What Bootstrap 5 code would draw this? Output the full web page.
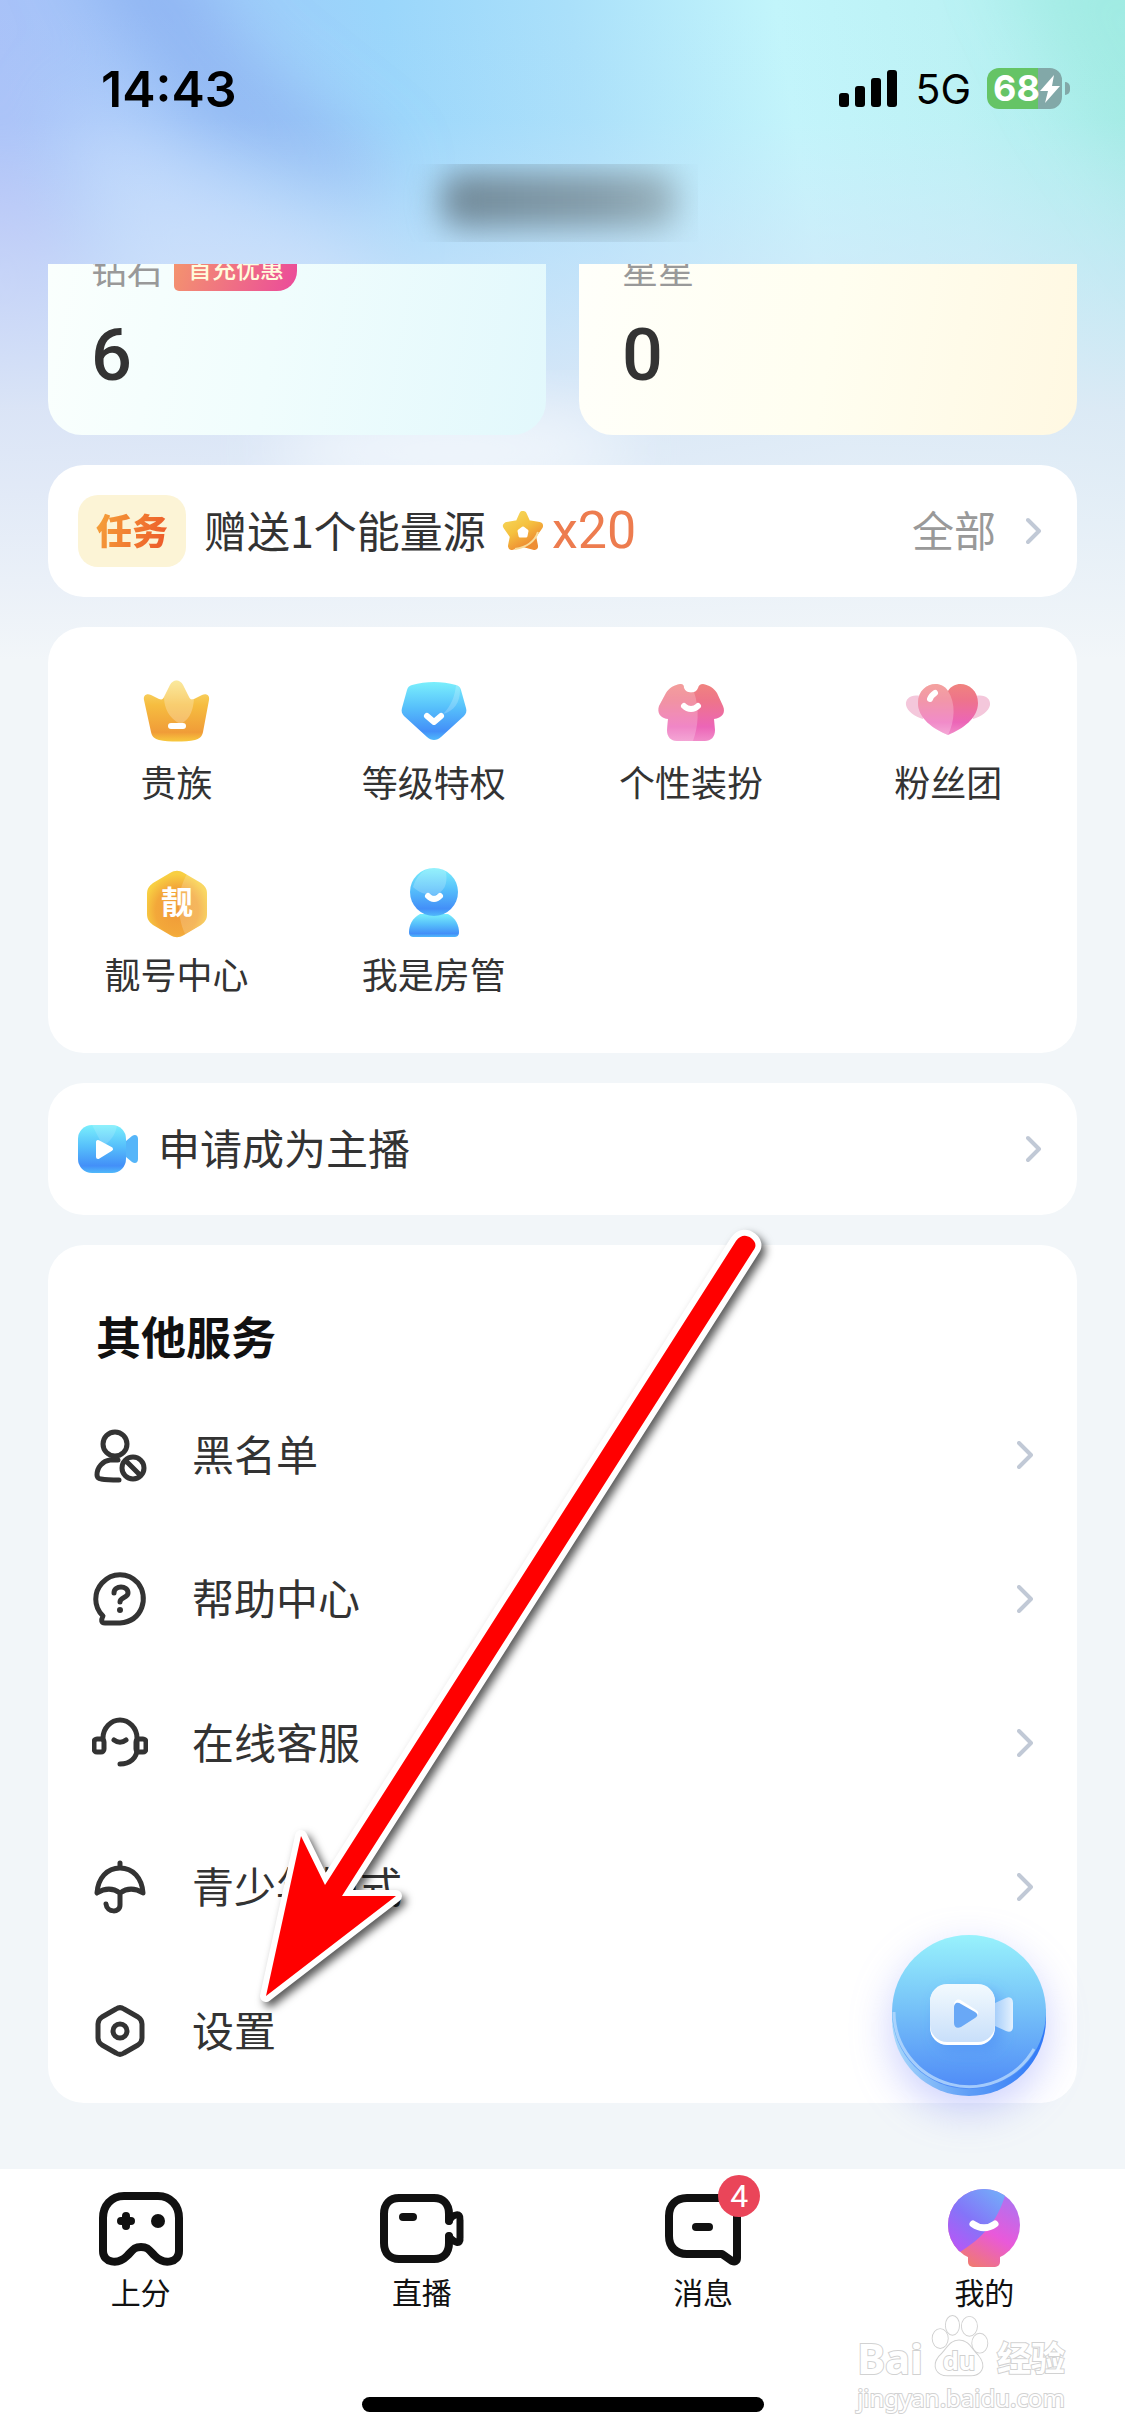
<!DOCTYPE html>
<html lang="zh-CN">
<head>
<meta charset="utf-8">
<meta name="viewport" content="width=device-width, initial-scale=1">
<title>我的</title>
<link rel="stylesheet" href="https://cdn.jsdelivr.net/npm/bootstrap@5.3.0/dist/css/bootstrap.min.css">
<style>
  body { font-family: "Noto Sans CJK SC", sans-serif; color: #333; background: #f2f6f9; font-size: 42px; line-height: 54px; }
  a { color: inherit; text-decoration: none; }
  svg { display: block; flex: none; }
  .app-page { min-height: 100vh; position: relative; }
  .backdrop { position: absolute; top: 0; left: 0; width: 100%; height: 660px; z-index: -1; }
  .status-bar { padding: 65px 55px 0 101px; height: 112px; font-family: Inter, sans-serif; color: #000; }
  .clock { font-size: 50px; font-weight: 600; }
  .net { font-size: 41px; }
  .battery { width: 75px; height: 41px; border-radius: 12px; background: linear-gradient(90deg, #65c466 68%, #82a8a8 68%); color: #fff; font-size: 36px; font-weight: 700; line-height: 41px; padding-left: 6px; }
  .battery-nub { width: 5px; height: 13px; border-radius: 0 6px 6px 0; background: #82a8a8; margin-left: 3px; }
  .name-strip { height: 78px; width: 300px; margin: 52px 0 22px 398px; overflow: hidden; }
  .name-blur { width: 236px; height: 56px; margin: 8px 0 0 43px; border-radius: 20px; background: linear-gradient(90deg, #6f8796, #849ca9 70%, #9bb5c0); filter: blur(16px); }
  .wallet { overflow: hidden; gap: 33px; }
  .wallet-card { flex: 1; height: 171px; padding: 0 43px; border-radius: 0 0 34px 34px; overflow: hidden; }
  .wallet-card.gem { background: linear-gradient(100deg, #fafffd, #f0fdfd 45%, #e2f8fc); }
  .wallet-card.star { background: linear-gradient(100deg, #fffffa, #fffef0 50%, #fff8e2); }
  .wallet-head { height: 46px; margin-top: -19px; line-height: 46px; font-size: 36px; color: #999; gap: 11px; }
  .promo { height: 46px; line-height: 46px; padding: 0 13px 0 14px; border-radius: 20px 20px 20px 5px; background: linear-gradient(110deg, #f4976c, #eb4a9b); color: #fffbdc; font-size: 24px; font-weight: 500; }
  .wallet-num { font-family: Roboto, sans-serif; font-weight: 500; font-size: 72px; line-height: 72px; margin-top: 29px; }
  .stack { padding: 0 48px; gap: 30px; }
  .panel { background: #fff; border-radius: 36px; }
  .line-panel { height: 132px; padding: 0 35px 0 30px; }
  .line-text { padding-bottom: 4px; }
  .task-tag { width: 108px; height: 72px; border-radius: 20px; background: #fcf4d6; line-height: 68px; font-size: 36px; font-weight: 900; margin-right: 18px; }
  .task-tag span { background: linear-gradient(110deg, #f6a63b, #ec5528); -webkit-background-clip: text; background-clip: text; color: transparent; }
  .task-text { font-size: 43px; }
  .reward { font-family: Roboto, sans-serif; font-size: 52px; color: #ed7c4f; }
  .muted { color: #999; margin-right: 30px; }
  .cam-icon { margin-right: 18px; }
  .grid-panel { padding: 48px 0 54px; row-gap: 60px; font-size: 36px; line-height: 48px; }
  .grid-panel svg { width: 90px; height: 72px; margin-bottom: 10px; overflow: visible; }
  .grid-panel a { height: 132px; }
  .services { padding-top: 64px; }
  .services h2 { font-size: 45px; line-height: 54px; font-weight: 700; color: #111; margin: 0 0 20px 48px; }
  .service-row { height: 144px; padding: 0 44px; }
  .service-row svg:first-child { margin-right: 44px; }
  .ink { fill: none; stroke: #333; stroke-width: 5; stroke-linecap: round; stroke-linejoin: round; }
  .chev { fill: none; stroke: #c1c9d6; stroke-width: 4; stroke-linecap: round; stroke-linejoin: round; }
  .fab { right: 30px; bottom: 6px; filter: drop-shadow(0 14px 20px rgba(110,120,250,.35)); }
  .pointer { left: 200px; top: -30px; pointer-events: none; filter: drop-shadow(4px 5px 4px rgba(0,0,0,.65)); }
  .tabs { margin-top: 66px; height: 267px; background: #fff; font-size: 30px; line-height: 40px; color: #111; }
  .tabs a { flex: 1; padding-top: 18px; }
  .tabs a svg { width: 90px; height: 84px; }
  .tab-ink { fill: none; stroke: #111; stroke-width: 8; stroke-linecap: round; stroke-linejoin: round; }
  .count { width: 42px; height: 42px; border-radius: 50%; left: 60px; top: -12px; background: #ea4559; color: #fff; font: 400 32px/43px Roboto, sans-serif; }
  .home-bar { width: 402px; height: 15px; border-radius: 8px; bottom: 24px; background: #000; }
  .watermark { right: 60px; bottom: 24px; color: #fff; -webkit-text-stroke: 2px #d2d2d2; paint-order: stroke; font-family: "Noto Sans", "Noto Sans CJK SC", sans-serif; }
  .wm-top { font-size: 42px; font-weight: 700; line-height: 44px; height: 44px; margin-bottom: 4px; }
  .wm-top .wm-cn { font-size: 34px; }
  .wm-url { font-size: 24px; line-height: 28px; }
</style>
</head>
<body>
<div class="app-page d-flex flex-column">
  <svg class="backdrop" viewBox="0 0 1125 660" preserveAspectRatio="none" aria-hidden="true">
    <defs>
      <linearGradient id="sky" gradientUnits="userSpaceOnUse" x1="0" y1="60" x2="1125" y2="-120"><stop stop-color="#a9c2f8"/><stop offset=".16" stop-color="#a0c8f9"/><stop offset=".34" stop-color="#9ad6fb"/><stop offset=".5" stop-color="#aae0fa"/><stop offset=".68" stop-color="#c2f5fb"/><stop offset=".82" stop-color="#bcf2f5"/><stop offset="1" stop-color="#a3ede7"/></linearGradient>
      <linearGradient id="fade" x2="0" y2="1"><stop stop-color="#dbe6f8" stop-opacity="0"/><stop offset=".18" stop-color="#d5e6fa" stop-opacity=".05"/><stop offset=".4" stop-color="#d6e6f9" stop-opacity=".55"/><stop offset=".62" stop-color="#e1e9f6" stop-opacity=".88"/><stop offset="1" stop-color="#f2f6f9"/></linearGradient>
      <filter id="soft" x="-50%" y="-50%" width="200%" height="200%"><feGaussianBlur stdDeviation="34"/></filter>
    </defs>
    <rect width="1125" height="660" fill="url(#sky)"/>
    <g filter="url(#soft)">
      <path fill="#84a9ef" fill-opacity=".6" d="M60-60h110l70 110 150 120-30 40-160-80z"/>
      <path fill="#c6ddfd" fill-opacity=".7" d="M60 90 180 160 370 260 360 330 130 330z"/>
      <path fill="#b9b4f5" fill-opacity=".45" d="M-60 150 50 200 90 300 20 380-60 380z"/>
      <path fill="#9ceadd" fill-opacity=".5" d="M1000-60h200v340L1070 90z"/>
    </g>
    <rect width="1125" height="660" fill="url(#fade)"/>
    <ellipse cx="450" cy="450" rx="180" ry="40" fill="#f8fbfe" fill-opacity=".8" filter="url(#soft)"/>
  </svg>
  <header>
    <div class="status-bar d-flex align-items-center justify-content-between">
      <span class="clock">14:43</span>
      <div class="d-flex align-items-center">
        <svg width="60" height="38" viewBox="0 0 60 38"><rect x="0" y="23" width="10" height="14" rx="3"/><rect x="16" y="16" width="10" height="21" rx="3"/><rect x="32" y="8" width="10" height="29" rx="3"/><rect x="48" y="0" width="10" height="37" rx="3"/></svg>
        <span class="net ms-3 me-3">5G</span>
        <div class="battery d-flex align-items-center"><span>68</span><svg width="20" height="28" viewBox="0 0 20 28"><path fill="#fff" d="M14 0 0 16h8l-3 12L20 11h-8z"/></svg></div>
        <div class="battery-nub"></div>
      </div>
    </div>
    <div class="name-strip"><div class="name-blur"></div></div>
  </header>

  <main class="stack d-flex flex-column">
    <section class="wallet d-flex">
      <div class="wallet-card gem">
        <div class="wallet-head d-flex align-items-end"><span>钻石</span><span class="promo">首充优惠</span></div>
        <div class="wallet-num">6</div>
      </div>
      <div class="wallet-card star">
        <div class="wallet-head">星星</div>
        <div class="wallet-num">0</div>
      </div>
    </section>

    <a href="#" class="panel line-panel d-flex align-items-center">
      <span class="task-tag text-center"><span>任务</span></span>
      <span class="task-text line-text">赠送1个能量源</span>
      <svg class="ms-3 me-2" width="42" height="40" viewBox="0 0 42 40"><defs><linearGradient id="gs" x2="0.6" y2="1"><stop stop-color="#f5d75a"/><stop offset=".5" stop-color="#f5c13f"/><stop offset="1" stop-color="#ee8d33"/></linearGradient></defs><path fill="url(#gs)" stroke="url(#gs)" stroke-width="8" stroke-linejoin="round" d="m21 4 4 9 12 2-7 10 2 10-11-3-11 3 2-10-7-10 12-2z"/><path fill="none" stroke="#f8dc9b" stroke-width="2" d="M13 38c12-2 20-8 23-17"/><path fill="#fff" stroke="#fff" stroke-width="3" stroke-linejoin="round" d="m21 17 4 3-1 5h-6l-1-5z"/></svg>
      <span class="reward">x20</span>
      <span class="muted line-text ms-auto">全部</span>
      <svg width="16" height="28" viewBox="0 0 16 28"><path class="chev" d="m2 3 11 11L2 25"/></svg>
    </a>

    <section class="panel grid-panel row row-cols-4 g-0 text-center">
      <a href="#" class="col d-flex flex-column align-items-center"><svg viewBox="0 0 90 72"><defs><linearGradient id="gc" x2="0" y2="1"><stop stop-color="#f9e27c"/><stop offset=".4" stop-color="#f6bd40"/><stop offset=".85" stop-color="#f09c38"/><stop offset="1" stop-color="#f8c93e"/></linearGradient></defs><path fill="url(#gc)" d="M12 25c-1-5 3-7 7-5l8 4c3 1 4 0 5-2l6-12c3-6 10-6 13 0l6 12c1 2 2 3 5 2l8-4c4-2 8 0 7 5l-6 32c-1 5-4 7-8 8-10 2-26 2-36 0-4-1-7-3-8-8z"/><path fill="#fff" fill-opacity=".25" d="M32 22 38 10c3-6 10-6 13 0l6 12c1 2 2 3 5 2-1 14-6 22-14 25-11-6-16-16-16-27z"/><rect x="36" y="48" width="18" height="6" rx="3" fill="#fff"/></svg><span>贵族</span></a>
      <a href="#" class="col d-flex flex-column align-items-center"><svg viewBox="0 0 90 72"><defs><linearGradient id="gb" x2="0" y2="1"><stop stop-color="#7aeffc"/><stop offset=".45" stop-color="#56bffb"/><stop offset=".85" stop-color="#438ff8"/><stop offset="1" stop-color="#50b9fb"/></linearGradient></defs><path fill="url(#gb)" d="M23 10c14-4 30-4 44 0 3 1 4 2 5 5l5 18c1 3 0 6-2 8L52 62c-4 4-10 4-14 0L15 41c-2-2-3-5-2-8l5-18c1-3 2-4 5-5z"/><path fill="#fff" fill-opacity=".2" d="M67 10c3 1 4 2 4 5 0 13-6 21-17 24 8-8 12-18 13-29z"/><path fill="none" stroke="#fff" stroke-width="6" stroke-linecap="round" stroke-linejoin="round" d="m38 41 7 6 7-6"/></svg><span>等级特权</span></a>
      <a href="#" class="col d-flex flex-column align-items-center"><svg viewBox="0 0 90 72"><defs><linearGradient id="gp" x2="0" y2="1"><stop stop-color="#f0837f"/><stop offset=".3" stop-color="#ee748a"/><stop offset=".75" stop-color="#ec65b7"/><stop offset="1" stop-color="#f18cc9"/></linearGradient></defs><path fill="url(#gp)" d="M34 9c3 0 4 1 4 4 2 6 12 6 14 0 1-3 2-4 5-4 6 1 11 4 14 9l6 13c3 7-1 12-9 13l1 11c0 7-4 11-10 11H31c-6 0-10-4-10-11l1-11c-8-1-11-6-9-13l7-13c3-5 8-8 14-9z"/><path fill="#fff" fill-opacity=".22" d="M34 9c3 0 4 1 4 4 2 5 7 6 10 4 6 17 4 36-1 49H31c-6 0-10-4-10-11l1-11c-8-1-11-6-9-13l7-13c3-5 8-8 14-9z"/><path fill="none" stroke="#fff" stroke-width="6" stroke-linecap="round" d="M38 31c4 4 10 4 14 0"/></svg><span>个性装扮</span></a>
      <a href="#" class="col d-flex flex-column align-items-center"><svg viewBox="0 0 90 72"><path fill="#f4c7db" d="M20 22c-10-4-18 1-17 8 1 6 9 12 17 14zM70 22c10-4 18 1 17 8-1 6-9 12-17 14z"/><path fill="url(#gp)" d="M45 60C30 54 15 43 15 28c0-19 22-25 30-12 8-13 30-7 30 12 0 15-15 26-30 32z"/><path fill="#fff" fill-opacity=".25" d="M45 60C30 54 15 43 15 28c0-19 22-25 30-12 8 12 7 30 0 44z"/><path fill="none" stroke="#fff" stroke-width="6" stroke-linecap="round" d="M27 24c1-3 2-4 5-6"/></svg><span>粉丝团</span></a>
      <a href="#" class="col d-flex flex-column align-items-center"><svg viewBox="0 0 90 72"><defs><radialGradient id="gh" cy=".6" r=".55"><stop stop-color="#f09a38"/><stop offset=".65" stop-color="#f3a83a"/><stop offset="1" stop-color="#f8cf42"/></radialGradient></defs><path fill="url(#gh)" d="M38 6c5-3 9-3 14 0l17 10c4 3 6 6 6 11v20c0 5-2 8-6 11L52 68c-5 3-9 3-14 0L21 58c-4-3-6-6-6-11V27c0-5 2-8 6-11z"/><path fill="#fff" fill-opacity=".18" d="m55 7 14 9c4 3 6 6 6 11v20c0 5-2 8-6 11l-16 9c-9-20-8-43 2-60z"/><text x="45" y="47" text-anchor="middle" fill="#fff" font-size="32" font-weight="700">靓</text></svg><span>靓号中心</span></a>
      <a href="#" class="col d-flex flex-column align-items-center"><svg viewBox="0 0 90 72"><path fill="url(#gb)" d="M31 47h28c8 4 11 12 11 18 0 4-2 5-5 5H25c-3 0-5-1-5-5 0-6 3-14 11-18z"/><circle cx="45" cy="25" r="24" fill="url(#gb)"/><path fill="#fff" fill-opacity=".2" d="M45 1c5 0 9 1 12 4 2 12-2 20-11 23-10 0-17-3-22-8 3-11 11-19 21-19z"/><path fill="none" stroke="#fff" stroke-width="6" stroke-linecap="round" d="M39 29c4 4 8 4 12 0"/></svg><span>我是房管</span></a>
    </section>

    <a href="#" class="panel line-panel d-flex align-items-center">
      <svg class="cam-icon" width="62" height="48" viewBox="0 0 62 48"><path fill="#55b5f9" d="M48 16 54 11c3-2 6-1 6 3v20c0 4-3 5-6 3l-6-5z"/><rect width="48" height="48" rx="14" fill="url(#gb)"/><path fill="#fff" fill-opacity=".15" d="M39 1c-2 9-6 15-14 20L14 0h20z"/><path fill="#fff" stroke="#fff" stroke-width="4" stroke-linejoin="round" d="M20 17v15l13-8z"/></svg>
      <span class="line-text">申请成为主播</span>
      <svg class="ms-auto" width="16" height="28" viewBox="0 0 16 28"><path class="chev" d="m2 3 11 11L2 25"/></svg>
    </a>

    <section class="panel services position-relative">
      <h2>其他服务</h2>
      <a href="#" class="service-row d-flex align-items-center"><svg width="56" height="56" viewBox="0 0 56 56"><path class="ink" d="M27 53c-7 0-12 0-18-1-3 0-4-2-4-4 0-8 6-14 13-15h8"/><circle class="ink" cx="23" cy="17" r="12"/><circle class="ink" cx="41" cy="41" r="11"/><path class="ink" d="m34 34 14 14"/></svg><span class="line-text">黑名单</span><svg class="ms-auto" width="16" height="28" viewBox="0 0 16 28"><path class="chev" d="m2 2 12 12L2 26"/></svg></a>
      <a href="#" class="service-row d-flex align-items-center"><svg width="56" height="56" viewBox="0 0 56 56"><path class="ink" d="M28 52H13c-4 0-4-3-2-7C1 35 2 21 10 12c10-11 26-11 36 0 11 14 5 38-18 40z"/><path class="ink" d="M22 22c0-8 14-8 14 0 0 5-8 4-8 9"/><circle cx="28" cy="39" r="3" fill="#333"/></svg><span class="line-text">帮助中心</span><svg class="ms-auto" width="16" height="28" viewBox="0 0 16 28"><path class="chev" d="m2 2 12 12L2 26"/></svg></a>
      <a href="#" class="service-row d-flex align-items-center"><svg width="56" height="56" viewBox="0 0 56 56"><path class="ink" d="M11 24v-1c0-10 8-18 17-18s17 8 17 18v11c0 9-7 15-17 15M22 25c4 3 8 3 12 0"/><rect class="ink" x="2" y="24" width="10" height="13" rx="3"/><rect class="ink" x="44" y="24" width="10" height="13" rx="3"/></svg><span class="line-text">在线客服</span><svg class="ms-auto" width="16" height="28" viewBox="0 0 16 28"><path class="chev" d="m2 2 12 12L2 26"/></svg></a>
      <a href="#" class="service-row d-flex align-items-center"><svg width="56" height="56" viewBox="0 0 56 56"><path class="ink" d="M28 4v4M5 34C6 19 15 9 28 9s22 10 23 25c-8-5-16-5-23 0-7-5-15-5-23 0zM28 34v12c0 8-13 8-14-1"/></svg><span class="line-text">青少年模式</span><svg class="ms-auto" width="16" height="28" viewBox="0 0 16 28"><path class="chev" d="m2 2 12 12L2 26"/></svg></a>
      <a href="#" class="service-row d-flex align-items-center"><svg width="56" height="56" viewBox="0 0 56 56"><path class="ink" d="M24 6c3-2 5-2 8 0l14 8c3 2 4 4 4 7v14c0 3-1 5-4 7l-14 8c-3 2-5 2-8 0l-14-8c-3-2-4-4-4-7V21c0-3 1-5 4-7z"/><circle class="ink" cx="28" cy="28" r="7"/></svg><span class="line-text">设置</span></a>

      <svg class="pointer position-absolute" width="540" height="800" viewBox="248 1215 540 800"><path fill="#f00" stroke="#fff" stroke-width="12" stroke-linejoin="round" paint-order="stroke" d="M266 1996 301 1836 325 1885 736 1241c5-7 11-6 15-3 5 4 6 8 2 13L342 1896h54z"/></svg>

      <button type="button" class="fab btn p-0 border-0 position-absolute" aria-label="开播">
        <svg width="156" height="162" viewBox="0 0 156 162">
          <defs>
            <linearGradient id="f1" x2="0" y2="1"><stop stop-color="#98f2fc"/><stop offset=".5" stop-color="#74bff8"/><stop offset="1" stop-color="#4f8bf7"/></linearGradient>
            <linearGradient id="f2"><stop stop-color="#a8d8fb"/><stop offset=".5" stop-color="#5f9ef6"/><stop offset="1" stop-color="#2f78f7"/></linearGradient>
            <linearGradient id="f3" x2="0" y2="1"><stop stop-color="#f3fafe"/><stop offset="1" stop-color="#c8dffa"/></linearGradient>
            <linearGradient id="f5"><stop stop-color="#a8cffa"/><stop offset="1" stop-color="#e4f1fe"/></linearGradient>
            <filter id="fs" x="-30%" y="-30%" width="160%" height="160%"><feGaussianBlur stdDeviation="7"/></filter>
          </defs>
          <circle cx="78" cy="84" r="77" fill="url(#f2)"/>
          <circle cx="78" cy="77" r="77" fill="url(#f1)"/>
          <path fill="none" stroke="#b8dafc" stroke-width="3" stroke-opacity=".8" d="M3 77a75 75 0 0 0 140 37"/>
          <rect x="45" y="55" width="66" height="62" rx="18" fill="#4c8cf5" fill-opacity=".5" filter="url(#fs)"/>
          <path fill="url(#f5)" d="m104 68 11-5c4-2 7 0 7 5v24c0 4-3 6-7 4l-11-5z"/>
          <rect x="39" y="50" width="65" height="60" rx="17" fill="#fff"/>
          <rect x="39" y="49" width="65" height="58" rx="17" fill="url(#f3)"/>
          <path fill="#fff" d="M63 71c0-6 4-8 8-5l14 9c3 2 3 4 0 6z"/>
          <path fill="#69a8f6" d="M63 73c0-6 4-6 7-4l14 8c3 2 3 4 0 6l-14 9c-4 2-7 0-7-4z"/>
        </svg>
      </button>
    </section>
  </main>

  <nav class="tabs position-relative d-flex">
    <a href="#" class="d-flex flex-column align-items-center"><svg viewBox="0 0 90 84"><path class="tab-ink" d="M28 9h34c13 0 21 10 21 22v33c0 12-15 14-24 5-6-6-7-9-14-9s-8 3-14 9c-9 9-24 7-24-5V31C7 19 15 9 28 9z"/><path class="tab-ink" d="M30 29v10M25 34h10"/><circle cx="62" cy="34" r="7" fill="#111"/></svg><span>上分</span></a>
    <a href="#" class="d-flex flex-column align-items-center"><svg viewBox="0 0 90 84"><path class="tab-ink" d="M72 34V27c0-10-6-16-15-16H22C13 11 7 17 7 27v29c0 10 6 16 15 16h35c9 0 15-6 15-16v-7"/><path fill="none" stroke="#111" stroke-width="7" stroke-linecap="round" stroke-linejoin="round" d="M72 34c4-7 12-9 11-1v18c1 7-6 5-11-2"/><path class="tab-ink" d="M26 30h10"/></svg><span>直播</span></a>
    <a href="#" class="d-flex flex-column align-items-center"><span class="position-relative"><svg viewBox="0 0 90 84"><path class="tab-ink" d="M29 11h50v60c0 3-2 4-5 3l-10-7H29C18 67 11 60 11 49V29c0-11 7-18 18-18z"/><path class="tab-ink" d="M38 40h13"/></svg><span class="count position-absolute text-center">4</span></span><span>消息</span></a>
    <a href="#" class="d-flex flex-column align-items-center"><svg viewBox="0 0 90 84"><defs><linearGradient id="g1" gradientUnits="userSpaceOnUse" x1="60" y1="5" x2="15" y2="60"><stop stop-color="#74aaf9"/><stop offset=".55" stop-color="#8474f8"/><stop offset="1" stop-color="#b658f6"/></linearGradient><linearGradient id="g2" gradientUnits="userSpaceOnUse" x1="72" y1="12" x2="32" y2="80"><stop stop-color="#b072f0"/><stop offset=".5" stop-color="#e959da"/><stop offset="1" stop-color="#f07a70"/></linearGradient><clipPath id="head"><circle cx="45" cy="38" r="36"/></clipPath></defs><circle cx="45" cy="38" r="36" fill="url(#g2)"/><rect x="29" y="62" width="32" height="18" rx="5" fill="url(#g2)"/><path clip-path="url(#head)" fill="url(#g1)" d="M0 0h68C62 30 46 50 18 67L0 80z"/><path fill="none" stroke="#fff" stroke-width="7" stroke-linecap="round" d="M34 37c7 5 15 5 22 0"/></svg><span>我的</span></a>
    <div class="home-bar position-absolute start-50 translate-middle-x"></div>
    <div class="watermark position-absolute">
      <div class="wm-top d-flex align-items-end justify-content-between"><span>Bai</span><svg width="58" height="66" viewBox="0 0 60 70"><g fill="#fff" stroke="#d0d0d0" stroke-width="2"><ellipse cx="9" cy="26" rx="8" ry="10"/><ellipse cx="22" cy="12" rx="7" ry="10"/><ellipse cx="40" cy="13" rx="8" ry="10"/><ellipse cx="51" cy="31" rx="8" ry="10"/><path d="M29 28c10 0 13 9 20 16 10 12 3 22-10 21H19C5 66 0 55 8 45c8-7 11-17 21-17z"/></g><text x="29" y="59" text-anchor="middle" font-size="27" fill="#fff" stroke="#d0d0d0" stroke-width="2" paint-order="stroke">du</text></svg><span class="wm-cn">经验</span></div>
      <div class="wm-url">jingyan.baidu.com</div>
    </div>
  </nav>
</div>
<script src="https://cdn.jsdelivr.net/npm/bootstrap@5.3.0/dist/js/bootstrap.bundle.min.js"></script>
</body>
</html>
